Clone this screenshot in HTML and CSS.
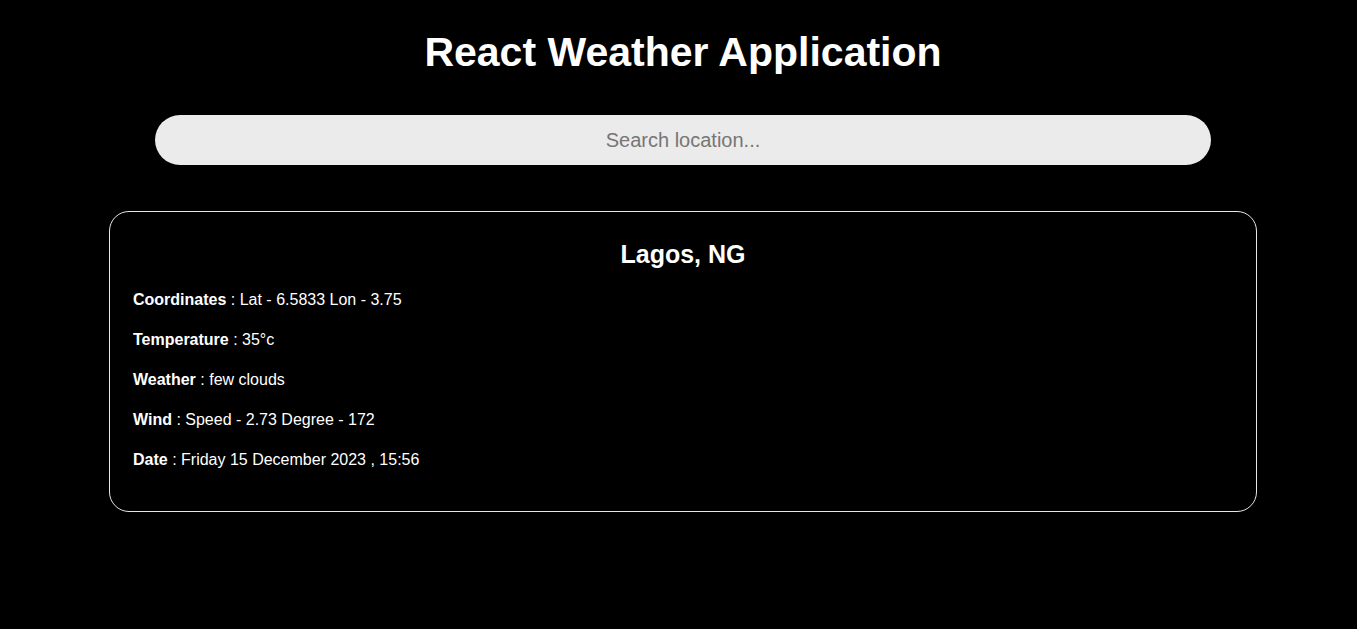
FILE: index.html
```html
<!DOCTYPE html>
<html lang="en">
<head>
<meta charset="utf-8">
<title>React Weather Application</title>
<link rel="stylesheet" href="styles.css">
</head>
<body>
<main class="app">
  <h1 class="title">React Weather Application</h1>
  <input class="search" type="text" placeholder="Search location...">
  <section class="card">
    <h2 class="city">Lagos, NG</h2>
    <p class="row"><b>Coordinates</b> : Lat - 6.5833 Lon - 3.75</p>
    <p class="row"><b>Temperature</b> : 35°c</p>
    <p class="row"><b>Weather</b> : few clouds</p>
    <p class="row"><b>Wind</b> : Speed - 2.73 Degree - 172</p>
    <p class="row"><b>Date</b> : Friday 15 December 2023 , 15:56</p>
  </section>
</main>
</body>
</html>
```

FILE: styles.css
```css
html, body {
  margin: 0;
  padding: 0;
  background: #000;
  color: #fff;
  font-family: "Liberation Sans", Arial, sans-serif;
}

.app {
  padding-left: 9px;
  display: flex;
  flex-direction: column;
  align-items: center;
}

.title {
  margin: 27px 0 0;
  font-size: 41px;
  line-height: 50px;
  font-weight: bold;
}

.search {
  box-sizing: border-box;
  margin-top: 38px;
  width: 1056px;
  height: 50px;
  border: none;
  border-radius: 25px;
  background: #ebebeb;
  text-align: center;
  font-family: "Liberation Sans", Arial, sans-serif;
  font-size: 20px;
  color: #333;
  outline: none;
}

.search::placeholder {
  color: #767676;
}

.card {
  box-sizing: border-box;
  margin-top: 46px;
  width: 1148px;
  height: 301px;
  border: 1px solid #e6e6e6;
  border-radius: 20px;
  padding: 24px 23px;
}

.city {
  margin: 0 0 16px;
  text-align: center;
  font-size: 25px;
  line-height: 36px;
  font-weight: bold;
}

.row {
  margin: 0 0 16px;
  font-size: 16px;
  line-height: 24px;
}
```
